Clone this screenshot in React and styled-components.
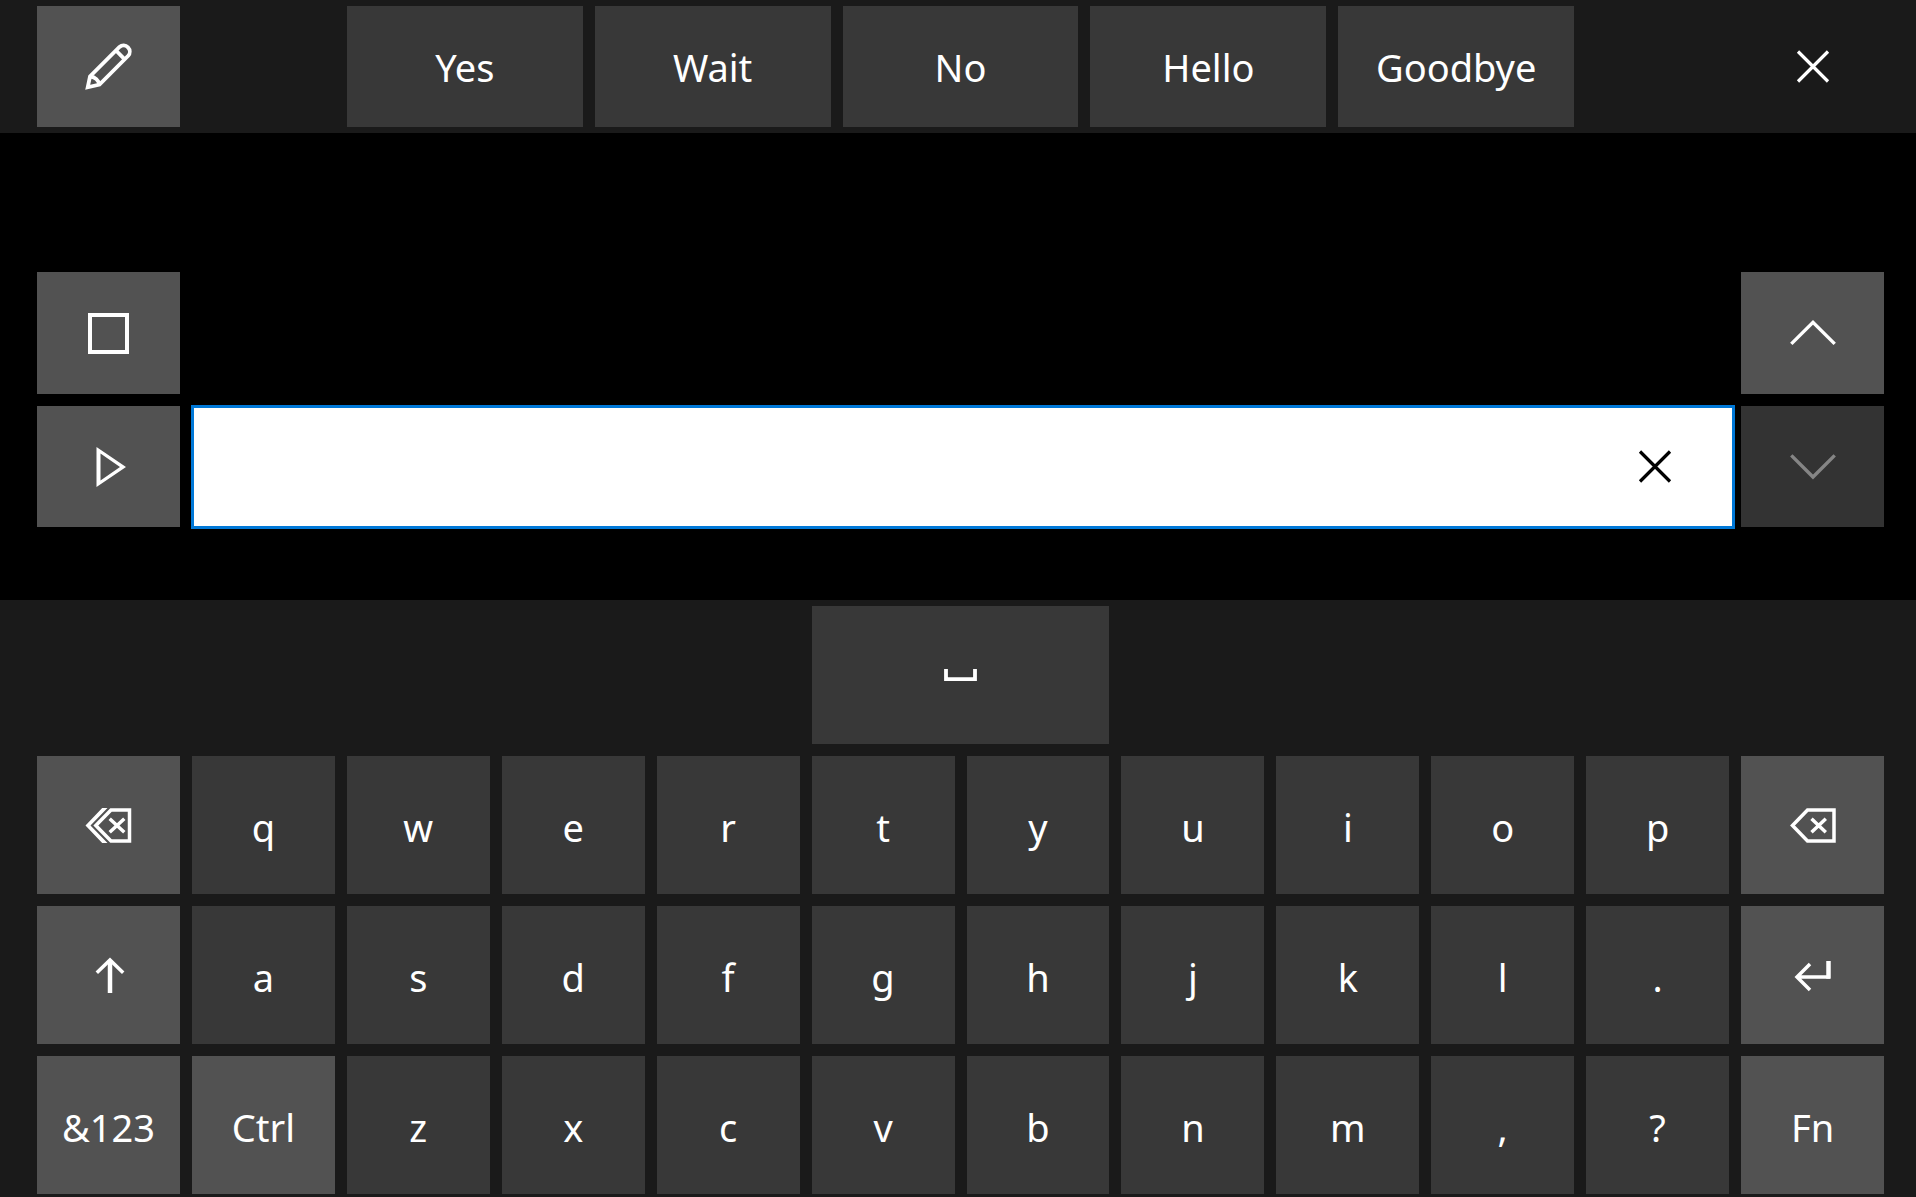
import React, { useState } from "react";
import styled, { createGlobalStyle } from "styled-components";

const GlobalStyle = createGlobalStyle`
  * { box-sizing: border-box; }
  body {
    margin: 0;
    background: #1a1a1a;
    font-family: "Noto Sans", "Open Sans", sans-serif;
  }
`;

const Page = styled.div`
  display: flex;
  flex-direction: column;
  min-height: 100vh;
`;

const KeyGrid = styled.div`
  display: grid;
  grid-template-columns: repeat(12, minmax(0, 1fr));
  grid-auto-rows: ${(p) => p.$rows};
  gap: 12px;
  padding: 0 32px 0 37px;
`;

const PhraseBar = styled.header`
  padding: 6px 0;
`;

const SpeechArea = styled.main`
  padding: 139px 0 73px;
  background: #000;
`;

const Keyboard = styled.section`
  padding: 6px 0 3px;
`;

const tones = {
  letter: "#383838",
  command: "#525252",
  plain: "transparent",
};

const Key = styled.button`
  display: flex;
  align-items: center;
  justify-content: center;
  grid-column: ${(p) => p.$start || "auto"} / span ${(p) => p.$span || 1};
  margin: 0;
  padding: ${(p) => (p.$icon || p.$phrase ? "0" : "3px 0 0")};
  border: 0;
  border-radius: 0;
  background: ${(p) => tones[p.$tone || "letter"]};
  color: #fff;
  font-family: inherit;
  font-size: 38px;
  line-height: 52px;

  &:disabled {
    background: #333;
    color: #858585;
  }
`;

const PhraseGroup = styled.div`
  display: grid;
  grid-column: 3 / span 8;
  grid-template-columns: repeat(5, minmax(0, 1fr));
  gap: 12px;
`;

const TextBox = styled.div`
  display: flex;
  grid-column: 2 / span 10;
  margin: -1px -6px -2px -1px;
  border: 3px solid #0078d7;
  background: #fff;
`;

const TextInput = styled.input`
  flex: 1;
  min-width: 0;
  padding: 0 24px;
  border: 0;
  outline: 0;
  background: transparent;
  color: #000;
  font-family: inherit;
  font-size: 38px;
`;

const ClearButton = styled.button`
  display: flex;
  align-items: center;
  justify-content: center;
  width: 155px;
  padding: 0;
  border: 0;
  background: transparent;
  color: #000;
`;

const Glyph = styled.svg`
  display: block;
  width: 48px;
  height: 48px;
  fill: none;
  stroke: currentColor;
  stroke-width: 3.5;
`;

const glyphs = {
  pencil: (
    <>
      <path
        d="M3.7 44.3 6 33.5 35.5 4A6.2 6.2 0 0 1 44.2 12.8L15.5 41.5Z"
        strokeWidth="3.8"
      />
      <path
        d="M32 7.5 40.7 16.3M6.5 33.5C11 34 14.5 37.5 15.5 41.5"
        strokeWidth="3.8"
      />
    </>
  ),
  close: <path d="M9 8.5 39 38.5M39 8.5 9 38.5" strokeWidth="3.2" />,
  stop: <rect x="6" y="6" width="37" height="37" strokeWidth="4" />,
  play: (
    <path
      d="M12.5 4 42 24 12.5 44ZM16.5 10.5V37.5L36 24Z"
      fill="currentColor"
      fillRule="evenodd"
      stroke="none"
    />
  ),
  up: <path d="M2.3 34.9 24 13.3 45.7 34.9" strokeWidth="3.4" />,
  down: <path d="M2.3 12.4 24 34 45.7 12.4" strokeWidth="3.4" />,
  space: <path d="M10 18V28.2H39V18" strokeWidth="3.8" />,
  deleteWord: (
    <>
      <path d="M11.8 24.5 27 9H45.5V40H27ZM25.7 17.8 40.3 31.2M40.3 17.8 25.7 31.2" />
      <path
        d="M1.5 24.5 18.2 7H23.5L6.5 24.5 23.5 42H18.2Z"
        fill="currentColor"
        stroke="none"
      />
    </>
  ),
  backspace: (
    <path d="M3.5 24.5 18.5 9H45V40H18.5ZM22.5 17.8 36.8 31.2M36.8 17.8 22.5 31.2" />
  ),
  shift: (
    <>
      <path d="M12.8 21.8 26 9 39.2 21.8" />
      <path d="M26 9V42" strokeWidth="4.5" />
    </>
  ),
  enter: (
    <>
      <path d="M21 13 8 26 21 39M8 26H41" />
      <path d="M39.5 10V27.7" strokeWidth="4.5" />
    </>
  ),
};

function Icon({ name }) {
  return (
    <Glyph viewBox="0 0 48 48" aria-hidden="true">
      {glyphs[name]}
    </Glyph>
  );
}

function IconKey({ icon, label, ...rest }) {
  return (
    <Key type="button" $icon aria-label={label} {...rest}>
      <Icon name={icon} />
    </Key>
  );
}

const phrases = ["Yes", "Wait", "No", "Hello", "Goodbye"];

export default function App() {
  const [text, setText] = useState("");
  const add = (s) => setText((t) => t + s);
  const letters = (row) =>
    row.map((c) => (
      <Key type="button" key={c} onClick={() => add(c)}>
        {c}
      </Key>
    ));

  return (
    <Page>
      <GlobalStyle />
      <PhraseBar>
        <KeyGrid $rows="121px">
          <IconKey icon="pencil" label="Edit phrases" $tone="command" />
          <PhraseGroup>
            {phrases.map((p) => (
              <Key type="button" $phrase key={p} onClick={() => add(p + " ")}>
                {p}
              </Key>
            ))}
          </PhraseGroup>
          <IconKey icon="close" label="Close" $tone="plain" $start={12} />
        </KeyGrid>
      </PhraseBar>
      <SpeechArea>
        <KeyGrid $rows="122px 121px">
          <IconKey icon="stop" label="Stop" $tone="command" />
          <IconKey icon="up" label="Previous" $tone="command" $start={12} />
          <IconKey icon="play" label="Speak" $tone="command" />
          <TextBox>
            <TextInput
              type="text"
              aria-label="Text to speak"
              value={text}
              onChange={(e) => setText(e.target.value)}
            />
            <ClearButton
              type="button"
              aria-label="Clear text"
              onClick={() => setText("")}
            >
              <Icon name="close" />
            </ClearButton>
          </TextBox>
          <IconKey icon="down" label="Next" disabled />
        </KeyGrid>
      </SpeechArea>
      <Keyboard aria-label="Keyboard">
        <KeyGrid $rows="138px">
          <IconKey
            icon="space"
            label="Space"
            $start={6}
            $span={2}
            onClick={() => add(" ")}
          />
          <IconKey icon="deleteWord" label="Delete word" $tone="command" $start={1} />
          {letters(["q", "w", "e", "r", "t", "y", "u", "i", "o", "p"])}
          <IconKey
            icon="backspace"
            label="Backspace"
            $tone="command"
            onClick={() => setText((t) => t.slice(0, -1))}
          />
          <IconKey icon="shift" label="Shift" $tone="command" />
          {letters(["a", "s", "d", "f", "g", "h", "j", "k", "l", "."])}
          <IconKey icon="enter" label="Enter" $tone="command" />
          <Key type="button" $tone="command">&amp;123</Key>
          <Key type="button" $tone="command">Ctrl</Key>
          {letters(["z", "x", "c", "v", "b", "n", "m", ",", "?"])}
          <Key type="button" $tone="command">Fn</Key>
        </KeyGrid>
      </Keyboard>
    </Page>
  );
}
